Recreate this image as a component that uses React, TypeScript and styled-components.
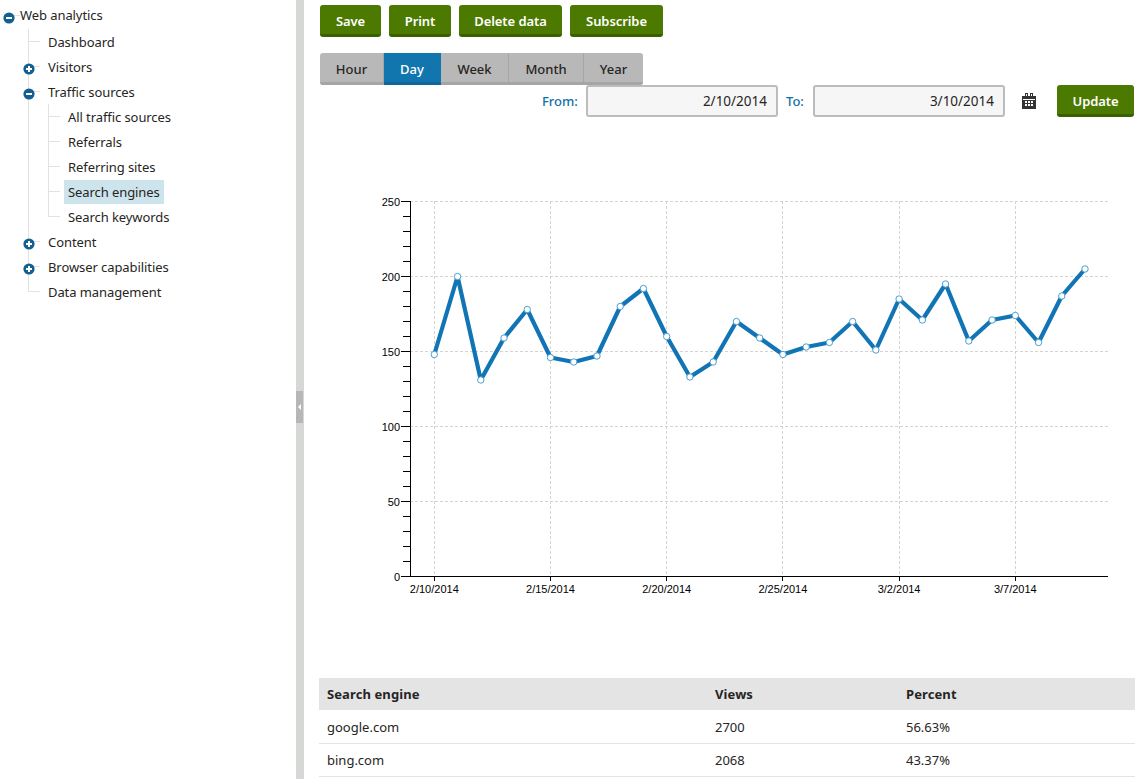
import styled, { createGlobalStyle } from "styled-components";

const GlobalStyle = createGlobalStyle`
  html, body {
    margin: 0;
    padding: 0;
    background: #ffffff;
    overflow: hidden;
  }
  body {
    font-family: "Noto Sans", "Open Sans", Arial, sans-serif;
    font-size: 13px;
    color: #262524;
  }
`;

const DAILY_VIEWS = [
  148, 200, 131, 159, 178, 146, 143, 147, 180, 192, 160, 133, 143, 170, 159, 148, 153, 156, 170, 151,
  185, 171, 195, 157, 171, 174, 156, 187, 205,
];
const DATE_TICKS = [
  { label: "2/10/2014", day: 0 },
  { label: "2/15/2014", day: 5 },
  { label: "2/20/2014", day: 10 },
  { label: "2/25/2014", day: 15 },
  { label: "3/2/2014", day: 20 },
  { label: "3/7/2014", day: 25 },
];
const VALUE_TICKS = [0, 50, 100, 150, 200, 250];
const MINOR_TICKS = Array.from({ length: 26 }, (_, i) => i * 10);

const dayX = (day: number) => 434.3 + day * 23.24;
const valueY = (value: number) => 576 - value * 1.5;
const gridX = (day: number) => Math.floor(dayX(day)) + 0.5;

const ExpandIcon = ({ open }: { open?: boolean }) => (
  <svg width="12" height="12" viewBox="0 0 12 12">
    <circle cx="6" cy="6" r="5.6" fill="#125f92" />
    <rect x="3" y="5" width="6" height="2" fill="#fff" />
    {!open && <rect x="5" y="3" width="2" height="6" fill="#fff" />}
  </svg>
);

const CalendarIcon = () => (
  <svg width="14" height="16" viewBox="0 0 14 16">
    <path
      fill="#333"
      fillRule="evenodd"
      d="M3 0h3v3h2V0h3v3h3v13H0V3h3zM4 1v2h1V1zM9 1v2h1V1zM1 6v1h12V6zM3 8v2h2V8zM6 8v2h2V8zM9 8v2h2V8zM3 11v2h2v-2zM6 11v2h2v-2zM9 11v2h2v-2z"
    />
  </svg>
);

const Chart = () => (
  <ChartSvg viewBox="319 117 816 561">
    {VALUE_TICKS.slice(1).map((v) => (
      <GridLine key={v} x1={410} x2={1108} y1={valueY(v) + 0.5} y2={valueY(v) + 0.5} />
    ))}
    {DATE_TICKS.map((t) => (
      <GridLine key={t.label} x1={gridX(t.day)} x2={gridX(t.day)} y1={201} y2={576} />
    ))}
    {MINOR_TICKS.map((v) => (
      <AxisLine key={v} x1={v % 50 === 0 ? 401 : 403} x2={411} y1={valueY(v) + 0.5} y2={valueY(v) + 0.5} />
    ))}
    {DATE_TICKS.map((t) => (
      <AxisLine key={t.label} x1={gridX(t.day)} x2={gridX(t.day)} y1={576} y2={581} />
    ))}
    <AxisLine x1={410.5} x2={410.5} y1={201} y2={577} />
    <AxisLine x1={410} x2={1108} y1={576.5} y2={576.5} />
    {VALUE_TICKS.map((v) => (
      <AxisLabel key={v} x={400} y={valueY(v) + 4.5} textAnchor="end">
        {v}
      </AxisLabel>
    ))}
    {DATE_TICKS.map((t) => (
      <AxisLabel key={t.label} x={dayX(t.day)} y={593} textAnchor="middle">
        {t.label}
      </AxisLabel>
    ))}
    <Series points={DAILY_VIEWS.map((v, i) => `${dayX(i)},${valueY(v) + 0.5}`).join(" ")} />
    {DAILY_VIEWS.map((v, i) => (
      <Point key={i} cx={dayX(i)} cy={valueY(v) + 0.5} r={3.2} />
    ))}
  </ChartSvg>
);

export default function App() {
  return (
    <>
      <GlobalStyle />
      <Page>
        <Sidebar>
          <RootRow>
            <RootIcon>
              <ExpandIcon open />
            </RootIcon>
            <RowLabel>Web analytics</RowLabel>
          </RootRow>
          <Branch>
            <Node>
              <RowLabel>Dashboard</RowLabel>
            </Node>
            <Node>
              <NodeIcon>
                <ExpandIcon />
              </NodeIcon>
              <RowLabel>Visitors</RowLabel>
            </Node>
            <Node>
              <NodeIcon>
                <ExpandIcon open />
              </NodeIcon>
              <RowLabel>Traffic sources</RowLabel>
            </Node>
            <SubBranch>
              <Node>
                <RowLabel>All traffic sources</RowLabel>
              </Node>
              <Node>
                <RowLabel>Referrals</RowLabel>
              </Node>
              <Node>
                <RowLabel>Referring sites</RowLabel>
              </Node>
              <Node>
                <RowLabel $selected>Search engines</RowLabel>
              </Node>
              <Node>
                <RowLabel>Search keywords</RowLabel>
              </Node>
            </SubBranch>
            <Node>
              <NodeIcon>
                <ExpandIcon />
              </NodeIcon>
              <RowLabel>Content</RowLabel>
            </Node>
            <Node>
              <NodeIcon>
                <ExpandIcon />
              </NodeIcon>
              <RowLabel>Browser capabilities</RowLabel>
            </Node>
            <Node>
              <RowLabel>Data management</RowLabel>
            </Node>
          </Branch>
        </Sidebar>
        <Splitter>
          <SplitterHandle>
            <svg width="4" height="6" viewBox="0 0 4 6">
              <path fill="#fff" d="M3 0v6L0 3z" />
            </svg>
          </SplitterHandle>
        </Splitter>
        <Main>
          <Toolbar>
            <ActionButton $width={61}>Save</ActionButton>
            <ActionButton $width={62}>Print</ActionButton>
            <ActionButton $width={103}>Delete data</ActionButton>
            <ActionButton $width={93}>Subscribe</ActionButton>
          </Toolbar>
          <Tabs>
            <Tab $width={64}>Hour</Tab>
            <Tab $width={57} $active>
              Day
            </Tab>
            <Tab $width={68}>Week</Tab>
            <Tab $width={75}>Month</Tab>
            <Tab $width={59}>Year</Tab>
          </Tabs>
          <DateRow>
            <DateLabel $width={36}>From:</DateLabel>
            <DateInput readOnly value="2/10/2014" />
            <DateLabel $width={19}>To:</DateLabel>
            <DateInput readOnly value="3/10/2014" />
            <CalendarSlot>
              <CalendarIcon />
            </CalendarSlot>
            <ActionButton $width={77}>Update</ActionButton>
          </DateRow>
          <Chart />
          <Table>
            <colgroup>
              <col width={388} />
              <col width={191} />
              <col width={237} />
            </colgroup>
            <thead>
              <tr>
                <HeadCell>Search engine</HeadCell>
                <HeadCell>Views</HeadCell>
                <HeadCell>Percent</HeadCell>
              </tr>
            </thead>
            <tbody>
              <tr>
                <Cell>google.com</Cell>
                <Cell>2700</Cell>
                <Cell>56.63%</Cell>
              </tr>
              <tr>
                <Cell>bing.com</Cell>
                <Cell>2068</Cell>
                <Cell>43.37%</Cell>
              </tr>
            </tbody>
          </Table>
        </Main>
      </Page>
    </>
  );
}

const Page = styled.div`
  display: flex;
  min-height: 100vh;
`;

const Sidebar = styled.nav`
  flex: 0 0 296px;
  box-sizing: border-box;
  padding-top: 2px;
  letter-spacing: -0.08px;
`;

const RootRow = styled.div`
  position: relative;
  display: flex;
  align-items: center;
  height: 25px;
  padding-left: 16px;

  &::before {
    content: "";
    position: absolute;
    left: 8px;
    top: 13px;
    width: 12px;
    height: 1px;
    background: #e2e2e2;
  }
`;

const RootIcon = styled.span`
  position: absolute;
  left: 3px;
  top: 8px;
  height: 12px;
  z-index: 1;
`;

const Branch = styled.div`
  position: relative;
  margin: 2px 0 0 28px;

  &::before {
    content: "";
    position: absolute;
    left: 0;
    top: 0;
    height: 263px;
    width: 1px;
    background: #e2e2e2;
  }
`;

const SubBranch = styled.div`
  position: relative;
  margin-left: 20px;

  &::before {
    content: "";
    position: absolute;
    left: 0;
    top: 0;
    height: 113px;
    width: 1px;
    background: #e2e2e2;
  }
`;

const Node = styled.div`
  position: relative;
  display: flex;
  align-items: center;
  height: 25px;
  padding-left: 16px;

  &::before {
    content: "";
    position: absolute;
    left: 0;
    top: 12px;
    width: 12px;
    height: 1px;
    background: #e2e2e2;
  }
`;

const NodeIcon = styled.span`
  position: absolute;
  left: -5.5px;
  top: 7px;
  height: 12px;
  z-index: 1;
`;

const RowLabel = styled.span<{ $selected?: boolean }>`
  display: inline-block;
  line-height: 24px;
  padding: 0 4px;
  background: ${(p) => (p.$selected ? "#cde4ec" : "transparent")};
`;

const Splitter = styled.div`
  flex: 0 0 8px;
  background: #d6d8d6;
`;

const SplitterHandle = styled.div`
  display: flex;
  align-items: center;
  justify-content: center;
  width: 7px;
  height: 32px;
  margin-top: 391px;
  background: #b7b7b7;
`;

const Main = styled.main`
  flex: 1;
  min-width: 0;
  box-sizing: border-box;
  padding: 5px 2px 0 15px;
`;

const Toolbar = styled.div`
  display: flex;
  gap: 8px;
  margin-left: 1px;
`;

const ActionButton = styled.button<{ $width: number }>`
  box-sizing: border-box;
  width: ${(p) => p.$width}px;
  height: 32px;
  padding: 2px 0 0;
  border: 0;
  border-bottom: 3px solid #3a6000;
  border-radius: 3px;
  background: #4c7a00;
  color: #ffffff;
  font-family: inherit;
  font-size: 13px;
  font-weight: 600;
  letter-spacing: -0.08px;
`;

const Tabs = styled.div`
  display: flex;
  width: 323px;
  margin: 16px 0 0 1px;
  border-radius: 3px;
  overflow: hidden;
`;

const Tab = styled.div<{ $width: number; $active?: boolean }>`
  box-sizing: border-box;
  display: flex;
  align-items: center;
  justify-content: center;
  width: ${(p) => p.$width}px;
  height: 32px;
  padding-top: 2px;
  border-bottom: 3px solid ${(p) => (p.$active ? "#0e669a" : "#a5a5a5")};
  border-right: 1px solid ${(p) => (p.$active ? "#1175ae" : "#a5a5a5")};
  background: ${(p) => (p.$active ? "#1175ae" : "#b9b8b9")};
  color: ${(p) => (p.$active ? "#ffffff" : "#262524")};
  font-weight: 500;

  &:last-child {
    border-right: 0;
  }
`;

const DateRow = styled.div`
  display: flex;
  align-items: center;
  justify-content: flex-end;
  height: 32px;
  padding-right: 1px;
`;

const DateLabel = styled.label<{ $width: number }>`
  width: ${(p) => p.$width}px;
  margin-right: 8px;
  color: #1270a8;
  font-weight: 500;
  white-space: nowrap;
`;

const DateInput = styled.input`
  box-sizing: border-box;
  width: 192px;
  height: 32px;
  margin-right: 8px;
  padding: 0 9px 0 8px;
  border: 2px solid #bcbcbc;
  border-radius: 3px;
  background: #f6f6f6;
  color: #262524;
  font-family: inherit;
  font-size: 13.5px;
  text-align: right;
  outline: none;
`;

const CalendarSlot = styled.span`
  display: flex;
  margin: 0 21px 0 9px;
`;

const ChartSvg = styled.svg`
  display: block;
  width: 816px;
  height: 561px;
`;

const GridLine = styled.line`
  stroke: #d3d3d3;
  stroke-width: 1;
  stroke-dasharray: 3 2;
`;

const AxisLine = styled.line`
  stroke: #000000;
  stroke-width: 1;
`;

const AxisLabel = styled.text`
  font-family: "Liberation Sans", Arial, sans-serif;
  font-size: 11px;
  fill: #000000;
`;

const Series = styled.polyline`
  fill: none;
  stroke: #1175b5;
  stroke-width: 4.2;
  stroke-linejoin: round;
`;

const Point = styled.circle`
  fill: #ffffff;
  stroke: #4a9fd0;
  stroke-width: 1;
`;

const Table = styled.table`
  width: 816px;
  border-collapse: collapse;
  table-layout: fixed;
`;

const HeadCell = styled.th`
  height: 32px;
  padding: 0 8px;
  box-sizing: border-box;
  background: #e4e4e4;
  font-weight: 700;
  text-align: left;
  letter-spacing: 0.1px;
`;

const Cell = styled.td`
  height: 33px;
  box-sizing: border-box;
  padding: 1px 8px 0;
  border-bottom: 1px solid #e4e4e4;
`;
